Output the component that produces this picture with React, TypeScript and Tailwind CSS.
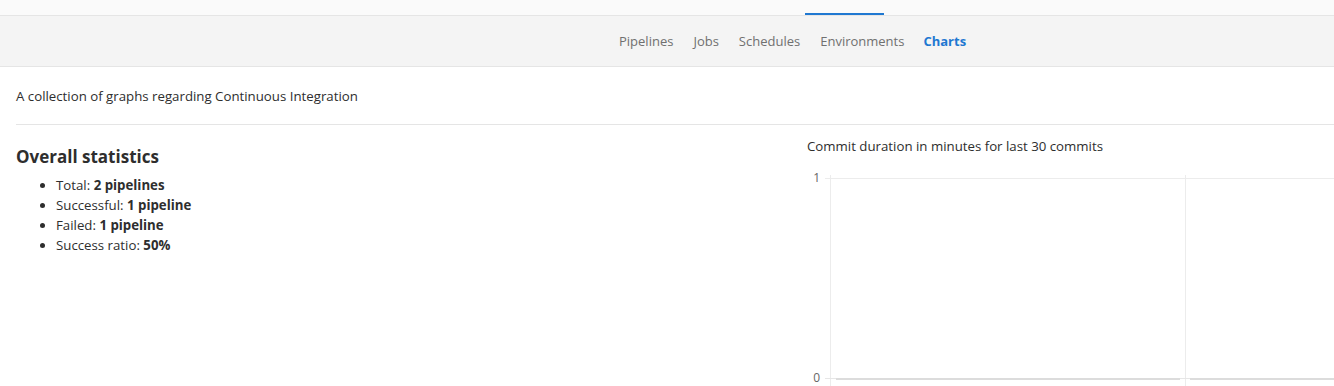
import React from 'react';

const navItems = ['Pipelines', 'Jobs', 'Schedules', 'Environments', 'Charts'];

const stats = [
  { label: 'Total:', value: '2 pipelines' },
  { label: 'Successful:', value: '1 pipeline' },
  { label: 'Failed:', value: '1 pipeline' },
  { label: 'Success ratio:', value: '50%' },
];

function CommitChart() {
  return (
    <svg width="527" height="216" className="block overflow-visible">
      {/* y labels */}
      <text x="13" y="12" textAnchor="end" fontSize="12" fill="#666" fontFamily="'Open Sans', sans-serif">1</text>
      <text x="13" y="212" textAnchor="end" fontSize="12" fill="#666" fontFamily="'Open Sans', sans-serif">0</text>
      {/* grid */}
      <line x1="18" y1="8.5" x2="527" y2="8.5" stroke="#ececec" />
      <line x1="23.5" y1="5" x2="23.5" y2="216" stroke="#ececec" />
      <line x1="378.5" y1="5" x2="378.5" y2="216" stroke="#ececec" />
      <line x1="18" y1="208.5" x2="527" y2="208.5" stroke="#e6e6e6" />
      {/* bars */}
      <rect x="29" y="208" width="344" height="2" fill="#dcdcdc" />
      <rect x="383" y="208" width="144" height="2" fill="#dcdcdc" />
    </svg>
  );
}

export default function App() {
  return (
    <div className="min-h-[386px] bg-white text-[13.25px] text-[#2e2e2e] overflow-hidden" style={{ fontFamily: "'Open Sans', sans-serif" }}>
      {/* Top bar */}
      <div className="h-[16px] bg-[#fafafa] border-b border-[#e5e5e5] flex items-end">
        <div className="ml-[805px] w-[79px] h-[2px] bg-[#1f78d1]" />
      </div>

      {/* Sub nav */}
      <div className="h-[51px] bg-[#f4f4f4] border-b border-[#e5e5e5] flex items-center pl-[609px] text-[13px]">
        {navItems.map((item) => (
          <a
            key={item}
            className={`px-[10px] leading-5 ${item === 'Charts' ? 'font-bold text-[#1f78d1] pl-[9px]' : 'text-[#707070]'}`}
          >
            {item}
          </a>
        ))}
      </div>

      <div className="pl-4">
        <p className="mt-[19px] leading-5">A collection of graphs regarding Continuous Integration</p>
        <hr className="mt-[18px] border-[#e5e5e5]" />

        <div className="grid grid-cols-[791px_1fr]">
          <div className="pt-5">
            <h4 className="text-[17px] font-bold leading-6">Overall statistics</h4>
            <ul className="mt-[6px] list-disc pl-[40px] leading-5">
              {stats.map((s) => (
                <li key={s.label}>
                  {s.label} <strong>{s.value}</strong>
                </li>
              ))}
            </ul>
          </div>
          <div className="pt-[11px]">
            <p className="leading-5">Commit duration in minutes for last 30 commits</p>
            <div className="mt-[14px]">
              <CommitChart />
            </div>
          </div>
        </div>
      </div>
    </div>
  );
}
